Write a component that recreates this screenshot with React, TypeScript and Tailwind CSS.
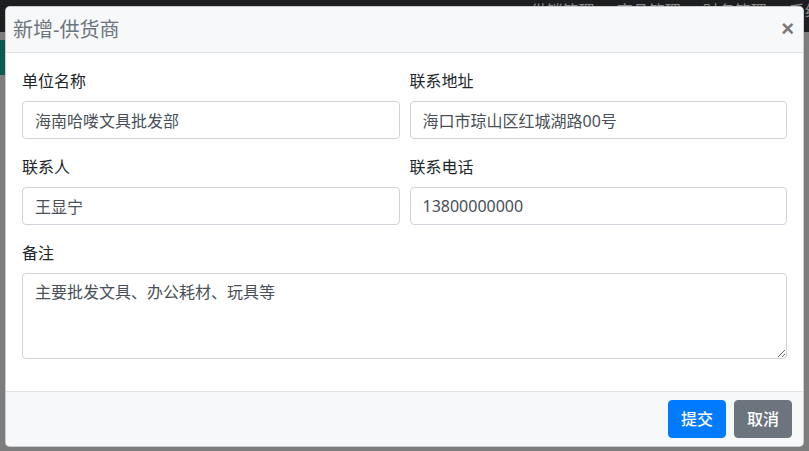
import React from "react";

const font = "font-['Noto_Sans','Noto_Sans_CJK_SC',sans-serif]";

function Field({ label, value }: { label: string; value: string }) {
  return (
    <div className="mb-4">
      <label className="block h-[24px] leading-[24px] text-[16px] text-[#212529] mb-2">{label}</label>
      <input
        readOnly
        value={value}
        className={`${font} block w-full h-[38px] px-3 py-[6px] text-[16px] leading-[24px] text-[#495057] bg-white border border-[#ced4da] rounded-[4px] outline-none`}
      />
    </div>
  );
}

export default function App() {
  return (
    <div className={`relative w-[809px] h-[451px] overflow-hidden bg-[#7d7d7d] ${font}`}>
      {/* dimmed page behind */}
      <div className="h-[32px] bg-[#1c1e20] flex justify-end overflow-hidden">
        <div className="flex items-center gap-[10px] -mt-[10px] text-[16px] leading-[24px] text-[#8a8a8a] mr-[-12px]">
          <span>供销管理 ▾</span>
          <span>商品管理 ▾</span>
          <span>财务管理 ▾</span>
          <span>系统</span>
        </div>
      </div>
      <div className="mt-[8px] w-[6px] h-[35px] bg-[#0b5a4d]" />

      {/* modal */}
      <div className="absolute left-[5px] top-[6px] w-[799px] h-[441px] bg-white border border-black/20 rounded-[5px] overflow-hidden flex flex-col">
        <div className="h-[46px] shrink-0 bg-[#f7f8fa] border-b border-[#dee2e6] flex items-center pl-[7px] pr-[9px]">
          <h5 className="text-[20px] leading-[30px] text-[#6c757d]">新增-供货商</h5>
          <span className="ml-auto font-['Liberation_Sans',sans-serif] font-bold text-[22px] leading-[22px] text-[#777] -mt-[1px]">×</span>
        </div>
        <div className="p-4 pb-4 shrink-0">
          <div className="grid grid-cols-2 gap-x-[10px]">
            <Field label="单位名称" value="海南哈喽文具批发部" />
            <Field label="联系地址" value="海口市琼山区红城湖路00号" />
            <Field label="联系人" value="王显宁" />
            <Field label="联系电话" value="13800000000" />
          </div>
          <div className="mb-4">
            <label className="block h-[24px] leading-[24px] text-[16px] text-[#212529] mb-2">备注</label>
            <textarea
              rows={3}
              defaultValue="主要批发文具、办公耗材、玩具等"
              className={`${font} block w-full h-[86px] px-3 py-[6px] text-[16px] leading-[24px] text-[#495057] bg-white border border-[#ced4da] rounded-[4px] outline-none resize-y`}
            />
          </div>
        </div>
        <div className="flex-1 bg-[#f7f8fa] border-t border-[#dee2e6] flex items-center justify-end gap-2 pr-[11px]">
          <button className="h-[38px] px-3 rounded-[4px] bg-[#007bff] border border-[#007bff] text-white text-[16px] leading-[24px] font-medium">提交</button>
          <button className="h-[38px] px-3 rounded-[4px] bg-[#6c757d] border border-[#6c757d] text-white text-[16px] leading-[24px] font-medium">取消</button>
        </div>
      </div>
    </div>
  );
}
